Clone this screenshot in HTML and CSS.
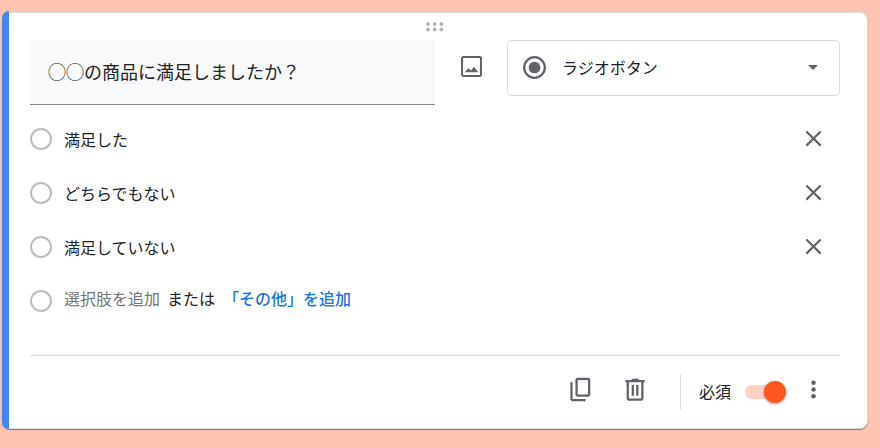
FILE: index.html
```html
<!DOCTYPE html>
<html lang="ja">
<head>
<meta charset="utf-8">
<meta name="viewport" content="width=device-width, initial-scale=1">
<title>質問の編集</title>
<link rel="stylesheet" href="styles.css">
</head>
<body>
<main class="card">
  <button class="drag" type="button" aria-label="移動">
    <svg width="18" height="10" viewBox="0 0 18 10"><circle cx="2" cy="2" r="1.9"/><circle cx="8.7" cy="2" r="1.9"/><circle cx="15.4" cy="2" r="1.9"/><circle cx="2" cy="7.5" r="1.9"/><circle cx="8.7" cy="7.5" r="1.9"/><circle cx="15.4" cy="7.5" r="1.9"/></svg>
  </button>

  <div class="head">
    <input class="question" type="text" aria-label="質問" value="◯◯の商品に満足しましたか？">
    <button class="icon-btn image-btn" type="button" aria-label="画像を追加">
      <svg class="icon" viewBox="0 0 24 24"><path d="M19.300 2.700H4.700c-1.100 0-2 .9-2 2v14.600c0 1.100.9 2 2 2h14.600c1.100 0 2-.9 2-2V4.700c0-1.100-.9-2-2-2zm.2 16.800h-15v-15h15z"/><path d="M14.200 12.300l-2.600 3.200-2.300-2L6 17h12z"/></svg>
    </button>
    <div class="type">
      <svg class="icon" viewBox="0 0 24 24"><circle cx="12" cy="12" r="9.200" fill="none" stroke="#5f6368" stroke-width="2"/><circle cx="12" cy="12" r="5.200"/></svg>
      <select class="type-select" aria-label="質問の形式"><option>ラジオボタン</option></select>
      <svg class="caret" width="10" height="5" viewBox="0 0 10 5"><path d="M0 0h10L5 5z"/></svg>
    </div>
  </div>

  <ul class="options">
    <li class="option">
      <input class="radio" type="radio" name="answer" disabled aria-label="満足した">
      <input class="option-text" type="text" aria-label="選択肢 1" value="満足した">
      <button class="icon-btn" type="button" aria-label="選択肢 1 を削除"><svg class="icon" viewBox="0 0 24 24"><path d="M19 6.400L17.600 5 12 10.600 6.400 5 5 6.400 10.600 12 5 17.600 6.400 19 12 13.400 17.600 19 19 17.600 13.400 12z"/></svg></button>
    </li>
    <li class="option">
      <input class="radio" type="radio" name="answer" disabled aria-label="どちらでもない">
      <input class="option-text" type="text" aria-label="選択肢 2" value="どちらでもない">
      <button class="icon-btn" type="button" aria-label="選択肢 2 を削除"><svg class="icon" viewBox="0 0 24 24"><path d="M19 6.400L17.600 5 12 10.600 6.400 5 5 6.400 10.600 12 5 17.600 6.400 19 12 13.400 17.600 19 19 17.600 13.400 12z"/></svg></button>
    </li>
    <li class="option">
      <input class="radio" type="radio" name="answer" disabled aria-label="満足していない">
      <input class="option-text" type="text" aria-label="選択肢 3" value="満足していない">
      <button class="icon-btn" type="button" aria-label="選択肢 3 を削除"><svg class="icon" viewBox="0 0 24 24"><path d="M19 6.400L17.600 5 12 10.600 6.400 5 5 6.400 10.600 12 5 17.600 6.400 19 12 13.400 17.600 19 19 17.600 13.400 12z"/></svg></button>
    </li>
    <li class="option">
      <input class="radio" type="radio" name="answer" disabled aria-label="新しい選択肢">
      <div class="add">
        <button class="add-option" type="button">選択肢を追加</button>
        <span>または</span>
        <button class="add-other" type="button">「その他」を追加</button>
      </div>
    </li>
  </ul>

  <footer class="footer">
    <button class="icon-btn" type="button" aria-label="コピーを作成"><svg class="icon" viewBox="0 0 24 24"><path d="M5 5.500H3V20.500C3 21.600 3.900 22.500 5 22.500H16.500v-2H5z"/><path d="M18.700 1.500H9.500c-1.100 0-2 .9-2 2v13c0 1.100.9 2 2 2h9.200c1.100 0 2-.9 2-2v-13c0-1.100-.9-2-2-2zm0 15H9.500v-13h9.200z"/></svg></button>
    <button class="icon-btn" type="button" aria-label="削除"><svg class="icon" viewBox="0 0 24 24"><path d="M15.500 3.500V2.500H9.500v1H4v2h1v14.500c0 1.100.9 2 2 2h11c1.100 0 2-.9 2-2V5.500h1v-2zM18 20H7V5.500h11z"/><path d="M9.500 8h2v9.500h-2zM13.500 8h2v9.500h-2z"/></svg></button>
    <div class="required">
      <label for="required">必須</label>
      <input class="toggle" id="required" type="checkbox" role="switch" checked>
    </div>
    <button class="icon-btn" type="button" aria-label="その他のオプション"><svg class="icon" viewBox="0 0 24 24"><circle cx="12" cy="6" r="2"/><circle cx="12" cy="12" r="2"/><circle cx="12" cy="18" r="2"/></svg></button>
  </footer>
</main>
</body>
</html>
```
FILE: styles.css
```css
* { box-sizing: border-box; }

body {
  margin: 0;
  padding: 12px 12px 18px 2px;
  background: #ffc3b1;
  color: #202124;
  font: 16px/24px "Noto Sans CJK JP", sans-serif;
}

button, input, select {
  margin: 0;
  padding: 0;
  border: 0;
  background: none;
  color: inherit;
  font: inherit;
}

.card {
  position: relative;
  padding: 0 27px 0 28px;
  border: 1px solid #dadce0;
  border-left: 0;
  border-radius: 8px;
  background: #fff;
  box-shadow: 0 1px 1px rgba(0, 0, 0, .4);
}

.card::before {
  content: "";
  position: absolute;
  inset: -2px auto -1px 0;
  width: 7px;
  border-radius: 8px 0 0 8px;
  background: #4285f4;
}

.drag {
  display: flex;
  justify-content: center;
  align-items: center;
  width: 100%;
  height: 27px;
  fill: #b4b4b4;
}

.head {
  display: grid;
  grid-template-columns: 50% 72px 1fr;
  align-items: start;
}

.question {
  width: 100%;
  height: 65px;
  padding: 0 18px 2px;
  border-bottom: 1px solid #80868b;
  background: #f8f9fa;
  font-size: 18px;
}

.icon {
  display: block;
  flex: none;
  width: 27px;
  height: 27px;
  fill: #5f6368;
}

.icon-btn {
  display: flex;
  justify-content: center;
  align-items: center;
  width: 54px;
  height: 54px;
  padding-bottom: 2px;
}

.image-btn { width: 100%; }

.type {
  display: flex;
  align-items: center;
  height: 56px;
  padding: 0 21px 2px 13px;
  border: 1px solid #dadce0;
  border-radius: 4px;
}

.type-select {
  flex: 1;
  min-width: 0;
  padding-left: 14px;
  appearance: none;
}

.caret { fill: #5f6368; }

.options {
  margin: 0;
  padding: 7px 0 27px;
  border-bottom: 1px solid #dadce0;
  list-style: none;
}

.option {
  display: flex;
  align-items: center;
  gap: 12px;
  height: 54px;
}

.radio {
  appearance: none;
  flex: none;
  width: 22px;
  height: 22px;
  border: 2px solid #bdbdbd;
  border-radius: 50%;
}

.option-text {
  flex: 1;
  min-width: 0;
}

.add {
  display: flex;
  gap: 7px;
  padding-bottom: 6px;
}

.add-option { color: #70757a; }

.add-other {
  padding-left: 1px;
  color: #1a73e8;
  font-weight: 500;
}

.footer {
  display: flex;
  justify-content: flex-end;
  align-items: center;
  height: 72px;
}

.footer .icon-btn { padding-bottom: 6px; }

.required {
  display: flex;
  align-items: center;
  gap: 14px;
  height: 36px;
  margin-left: 18px;
  padding-left: 18px;
  border-left: 1px solid #dadce0;
}

.required label { padding-bottom: 2px; }

.toggle {
  appearance: none;
  display: flex;
  justify-content: flex-end;
  align-items: center;
  width: 41px;
  height: 14px;
  border-radius: 7px;
  background: #ffd0c3;
}

.toggle::before {
  content: "";
  width: 22px;
  height: 22px;
  border-radius: 50%;
  background: #ff5722;
  box-shadow: 0 1px 3px rgba(0, 0, 0, .4);
}
```
